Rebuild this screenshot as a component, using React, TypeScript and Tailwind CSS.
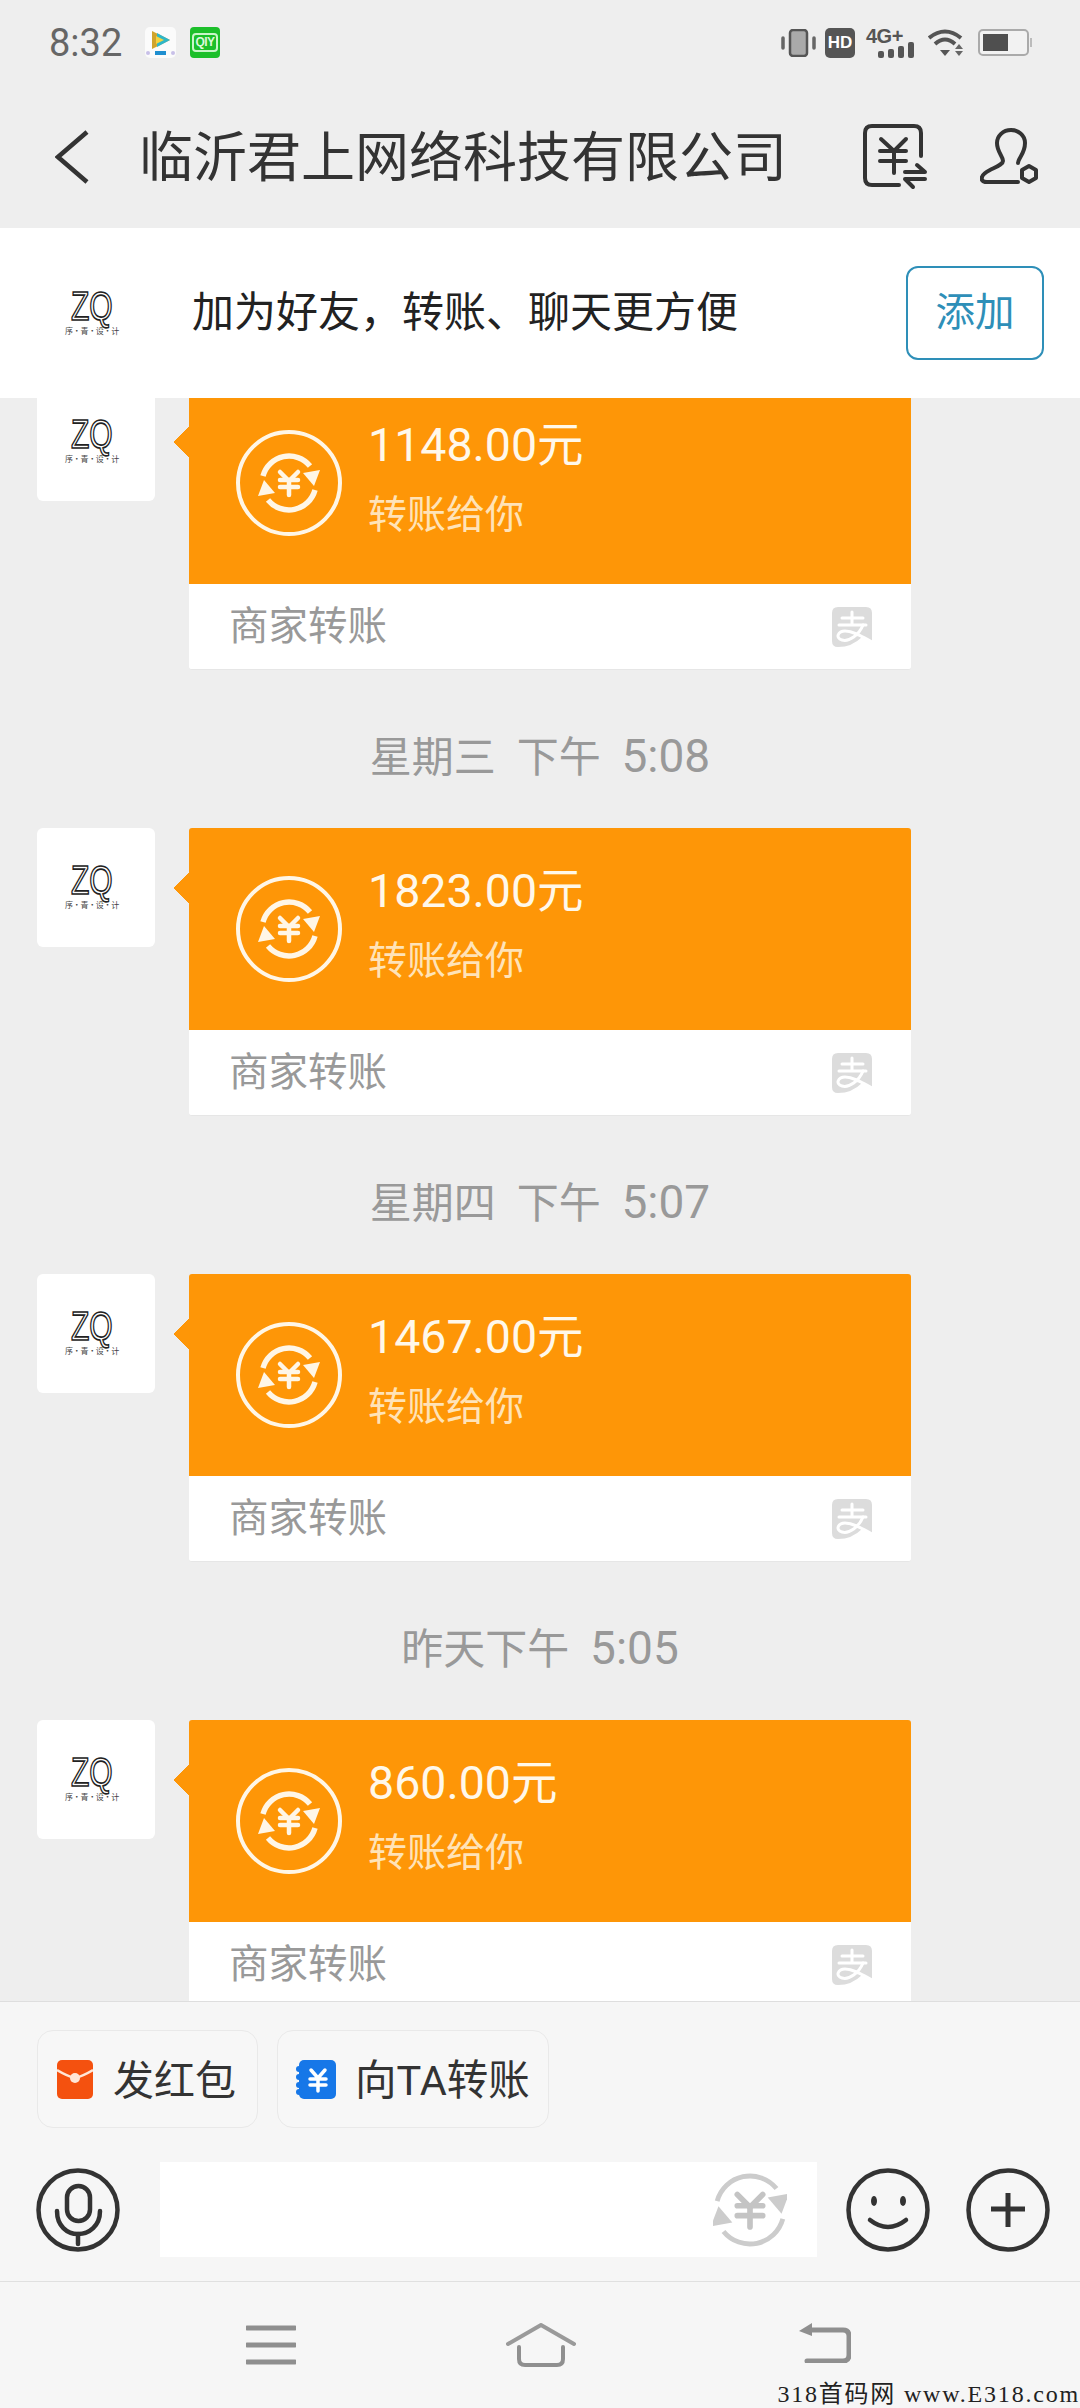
import React from "react";

const FONT = "font-['Roboto','Noto_Sans_CJK_SC',sans-serif]";

function Yen({ color, w = 4.5 }: { color: string; w?: number }) {
  return (
    <g fill="none" stroke={color} strokeWidth={w} strokeLinecap="round" strokeLinejoin="round">
      <path d="M44 42 L53 51 L62 42" />
      <path d="M44 50 H62 M44 57 H62 M53 51 V65" />
    </g>
  );
}

function Arcs({ color, r = 27, w = 5.5 }: { color: string; r?: number; w?: number }) {
  const c = 53;
  const k = r / 27;
  const p = (x: number, y: number, s: number) => `${c + s * x * k},${c + s * y * k}`;
  const half = (s: number) => (
    <g>
      <path
        d={`M${p(-26, -7, s)} A${r} ${r} 0 0 1 ${p(21, -17, s)}`}
        fill="none"
        stroke={color}
        strokeWidth={w}
      />
      <polygon points={`${p(14, -10, s)} ${p(31, -13, s)} ${p(25, 3, s)}`} fill={color} />
    </g>
  );
  return (
    <g>
      {half(1)}
      {half(-1)}
    </g>
  );
}

function TransferIcon() {
  return (
    <svg width="106" height="106" viewBox="0 0 106 106" className="shrink-0">
      <circle cx="53" cy="53" r="51" fill="none" stroke="#fff6e6" strokeWidth="4" />
      <Arcs color="#fff6e6" />
      <Yen color="#fff6e6" />
    </svg>
  );
}

function GrayTransfer() {
  return (
    <svg width="74" height="74" viewBox="15 15 76 76" className="shrink-0">
      <Arcs color="#cccccc" r={35} w={5} />
      <g transform="translate(-23.85 -23.85) scale(1.45)">
        <Yen color="#c4c4c4" w={4} />
      </g>
    </svg>
  );
}

function Alipay() {
  return (
    <svg width="40" height="40" viewBox="0 0 40 40" className="shrink-0">
      <path d="M6 0 H34 Q40 0 40 6 V36 L30 30 Q20 40 6 40 Q0 40 0 34 V6 Q0 0 6 0 Z" fill="#dcdcdc" />
      <g fill="none" stroke="#ffffff" strokeWidth="3" strokeLinecap="round">
        <path d="M10 11 H31 M7 18 H34 M20 5 V18" />
        <path d="M31 18 C27 28 17 35 10 33 C3 31 6 24 13 24 C22 24 31 30 40 35" />
      </g>
    </svg>
  );
}

function Avatar() {
  return (
    <div className="flex h-[119px] w-[118px] shrink-0 flex-col items-center rounded-[6px] bg-white pr-[8px] pt-[33px]">
      <div className="origin-center scale-x-75 font-['Liberation_Sans',sans-serif] text-[40px] leading-[38px] text-transparent [-webkit-text-stroke:1.6px_#222222]">
        ZQ
      </div>
      <div className="font-['Noto_Sans_CJK_SC',sans-serif] text-[8px] leading-[12px] tracking-[-0.3px] text-[#444444]">
        序·青·设·计
      </div>
    </div>
  );
}

function Transfer({ amount }: { amount: string }) {
  return (
    <div className="flex pl-[37px]">
      <Avatar />
      <div className="relative ml-[34px] w-[722px]">
        <svg width="17" height="32" viewBox="0 0 17 32" className="absolute left-[-16px] top-[44px]">
          <polygon points="17,0 1,16 17,32" fill="#fe9607" stroke="#fe9607" strokeLinejoin="round" strokeWidth="1" />
        </svg>
        <div className="flex h-[202px] items-center rounded-t-[3px] bg-[#fe9607] pl-[47px]">
          <TransferIcon />
          <div className="ml-[26px] flex flex-col gap-[14px] pb-[7px]">
            <div className="text-[46.5px] leading-[56px] text-[#fff8ea]">{amount}</div>
            <div className="text-[39px] leading-[56px] text-[#ffe3b8]">转账给你</div>
          </div>
        </div>
        <div className="flex h-[86px] items-center justify-between rounded-b-[3px] border-b border-[#e6e6e6] bg-white pl-[40px] pr-[39px]">
          <span className="pt-[1px] text-[39.5px] leading-[56px] text-[#999999]">商家转账</span>
          <Alipay />
        </div>
      </div>
    </div>
  );
}

function Stamp({ day, time }: { day: string; time: string }) {
  return (
    <div className="h-[158px] whitespace-pre pt-[58px] text-center text-[42px] leading-[56px] text-[#999999]">
      {day}
      {"  "}
      <span className="text-[46px]">{time}</span>
    </div>
  );
}

function StatusBar() {
  return (
    <div className="flex h-[85px] items-center pl-[49px] pr-[48px]">
      <span className="w-[96px] text-[38px] leading-[44px] text-[#666666]">8:32</span>
      <svg width="31" height="31" viewBox="0 0 31 31" className="shrink-0">
        <rect width="31" height="31" rx="5" fill="#fbfbfb" />
        <polygon points="7,4 25,13 7,22" fill="#d0a42c" />
        <polygon points="12,6 25,13 12,20" fill="#2fb6c8" />
        <polygon points="11,9 19,13 11,17" fill="#f4d33f" />
        <rect x="10" y="24" width="11" height="4" fill="#1f8fd0" />
        <circle cx="3" cy="26" r="2" fill="#c8c0e8" />
        <circle cx="28" cy="26" r="2" fill="#c8c0e8" />
      </svg>
      <div className="ml-[14px] flex h-[31px] w-[30px] items-center justify-center rounded-[4px] bg-[#1cbf2a]">
        <span className="rounded-[4px] border-2 border-[#c9f5c9] px-[1px] font-['Liberation_Sans',sans-serif] text-[12px] font-bold leading-[15px] tracking-[-0.5px] text-[#dcf8dc]">
          QIY
        </span>
      </div>
      <div className="ml-auto flex items-center">
        <svg width="35" height="28" viewBox="0 0 35 28" className="shrink-0">
          <rect x="9" y="1" width="17" height="26" rx="3" fill="#aaaaaa" stroke="#555555" strokeWidth="2.5" />
          <path d="M2 9 V19 M33 9 V19" stroke="#666666" strokeWidth="3.5" strokeLinecap="round" />
        </svg>
        <div className="ml-[9px] flex h-[30px] w-[30px] items-center justify-center rounded-[5px] bg-[#555555] font-['Liberation_Sans',sans-serif] text-[17px] font-bold leading-none text-white">
          HD
        </div>
        <div className="ml-[11px] flex h-[30px] w-[49px] flex-col">
          <span className="font-['Liberation_Sans',sans-serif] text-[20px] font-bold leading-[17px] tracking-[-0.5px] text-[#555555]">4G+</span>
          <svg width="36" height="16" viewBox="0 0 36 16" className="ml-[12px] mt-[-3px]">
            <rect x="0" y="9" width="6" height="7" rx="2" fill="#555555" />
            <rect x="10" y="7" width="6" height="9" rx="2" fill="#555555" />
            <rect x="20" y="4" width="6" height="12" rx="2" fill="#555555" />
            <rect x="30" y="0" width="6" height="16" rx="2" fill="#555555" />
          </svg>
        </div>
        <svg width="36" height="28" viewBox="0 0 36 28" className="ml-[13px] shrink-0">
          <g fill="none" stroke="#555555" strokeWidth="4">
            <path d="M1 9 Q17 -4 33 9" />
            <path d="M7 15 Q17 6 27 15" />
          </g>
          <polygon points="12,21 22,21 17,27" fill="#555555" />
          <polygon points="31,15 35,20 27,20" fill="#666666" />
          <polygon points="27,22 35,22 31,27" fill="#666666" />
        </svg>
        <svg width="54" height="27" viewBox="0 0 54 27" className="ml-[14px] shrink-0">
          <rect x="1" y="1" width="49" height="25" rx="4" fill="#f2f2f2" stroke="#aaaaaa" strokeWidth="2" />
          <rect x="5" y="5" width="25" height="17" fill="#4f4f4f" />
          <rect x="52" y="9" width="2" height="9" fill="#bbbbbb" />
        </svg>
      </div>
    </div>
  );
}

function Header() {
  return (
    <div className="flex h-[143px] items-center pl-[55px]">
      <svg width="34" height="54" viewBox="0 0 34 54" className="shrink-0">
        <path d="M32 2 L3 27 L32 52" fill="none" stroke="#333333" strokeWidth="4.5" />
      </svg>
      <div className="ml-[50px] w-[724px] pt-[5px] text-[54px] leading-[70px] text-[#333333]">临沂君上网络科技有限公司</div>
      <svg width="66" height="66" viewBox="0 0 66 66" className="shrink-0">
        <g fill="none" stroke="#333333" strokeWidth="4" strokeLinecap="round" strokeLinejoin="round">
          <path d="M58 32 V9 Q58 2 51 2 H9 Q2 2 2 9 V54 Q2 61 9 61 H36" />
          <path d="M18 15 L31 27 L43 15 M17 27 H43 M17 37 H43 M31 27 V49" />
          <path d="M42 48 H62 L54 41 M62 55 H42 L50 63" />
        </g>
      </svg>
      <svg width="60" height="58" viewBox="0 0 60 58" className="ml-[51px] shrink-0">
        <g fill="none" stroke="#333333" strokeWidth="4" strokeLinecap="round" strokeLinejoin="round">
          <path d="M38 35 C38 30 45 26 45 15 C45 7 38 2 31 2 C23 2 17 8 17 15 C17 24 23 28 23 33 C23 36 18 38 10 42 C2 46 1 49 2 52 C3 54 5 54 7 54 L38 54" />
          <polygon points="49,38 56,42 56,50 49,54 42,50 42,42" />
        </g>
      </svg>
    </div>
  );
}

function Banner() {
  return (
    <div className="flex h-[170px] items-center bg-white pl-[37px]">
      <Avatar />
      <div className="ml-[37px] w-[714px] text-[42px] leading-[60px] text-[#222222]">加为好友，转账、聊天更方便</div>
      <button className="flex h-[94px] w-[138px] items-center justify-center rounded-[12px] border-2 border-[#2e8fb8] text-[39.5px] leading-[50px] text-[#2e8fb8]">
        添加
      </button>
    </div>
  );
}

function Chips() {
  return (
    <div className="flex gap-[19px] pl-[37px] pt-[28px]">
      <div className="flex h-[98px] w-[221px] items-center rounded-[16px] border border-[#e9e9e9] bg-[#f7f7f7] pl-[19px]">
        <svg width="36" height="39" viewBox="0 0 36 39" className="shrink-0">
          <rect width="36" height="39" rx="5" fill="#f4510f" />
          <path d="M0 10 Q10 16 18 18 Q26 16 36 10" fill="none" stroke="#ffe6d6" strokeWidth="2.5" />
          <circle cx="18" cy="18" r="5" fill="#ffe6d6" />
        </svg>
        <span className="ml-[20px] pt-[3px] text-[41px] leading-[56px] text-[#333333]">发红包</span>
      </div>
      <div className="flex h-[98px] w-[272px] items-center rounded-[16px] border border-[#e9e9e9] bg-[#f7f7f7] pl-[18px]">
        <svg width="40" height="39" viewBox="0 0 40 39" className="shrink-0">
          <rect x="3" width="37" height="39" rx="5" fill="#1677e8" />
          <circle cx="3" cy="9" r="3" fill="#1677e8" />
          <circle cx="3" cy="17" r="3" fill="#1677e8" />
          <circle cx="3" cy="25" r="3" fill="#1677e8" />
          <circle cx="3" cy="32" r="3" fill="#1677e8" />
          <g fill="none" stroke="#ffffff" strokeWidth="3.5" strokeLinecap="round">
            <path d="M15 10 L22 18 L29 10 M14 19 H30 M14 25 H30 M22 18 V31" />
          </g>
        </svg>
        <span className="ml-[19px] pt-[3px] text-[41.5px] leading-[56px] text-[#333333]">向TA转账</span>
      </div>
    </div>
  );
}

function InputRow() {
  return (
    <div className="mb-[24px] mt-[34px] flex h-[95px] items-center pl-[36px]">
      <svg width="84" height="84" viewBox="0 0 84 84" className="shrink-0">
        <g fill="none" stroke="#333333" strokeWidth="4.5" strokeLinecap="round">
          <circle cx="42" cy="42" r="39.5" />
          <rect x="31" y="18" width="23" height="35" rx="11.5" />
          <path d="M21 43 C21 58 31 66 42 66 C53 66 64 58 64 43" />
          <path d="M42 66 V76" />
        </g>
      </svg>
      <div className="ml-[40px] flex h-[95px] w-[657px] items-center justify-end bg-white pr-[30px]">
        <GrayTransfer />
      </div>
      <svg width="84" height="84" viewBox="0 0 84 84" className="ml-[29px] shrink-0">
        <circle cx="42" cy="42" r="39.5" fill="none" stroke="#333333" strokeWidth="4.5" />
        <ellipse cx="28" cy="33" rx="3" ry="5" fill="#333333" />
        <ellipse cx="57" cy="33" rx="3" ry="5" fill="#333333" />
        <path d="M24 52 Q42 66 60 52" fill="none" stroke="#333333" strokeWidth="4.5" strokeLinecap="round" />
      </svg>
      <svg width="84" height="84" viewBox="0 0 84 84" className="ml-[36px] shrink-0">
        <circle cx="42" cy="42" r="39.5" fill="none" stroke="#333333" strokeWidth="4.5" />
        <path d="M25 41 H59 M42 25 V59" stroke="#333333" strokeWidth="5" />
      </svg>
    </div>
  );
}

function NavBar() {
  return (
    <div className="flex h-[126px] items-start border-t border-[#e0e0e0] pl-[246px] pt-[41px]">
      <svg width="50" height="42" viewBox="0 0 50 42" className="mt-[1px] shrink-0">
        <path d="M1 4 H49 M1 21 H49 M1 38 H49" stroke="#8f8f8f" strokeWidth="5" strokeLinecap="round" />
      </svg>
      <svg width="70" height="44" viewBox="0 0 70 44" className="ml-[210px] shrink-0">
        <path d="M2 21 L35 2 L68 21" fill="none" stroke="#9a9a9a" strokeWidth="4" strokeLinecap="round" strokeLinejoin="round" />
        <path d="M13 24 V36 Q13 42 19 42 H51 Q57 42 57 36 V24" fill="none" stroke="#8f8f8f" strokeWidth="4" strokeLinecap="round" />
      </svg>
      <svg width="52" height="40" viewBox="0 0 52 40" className="ml-[223px] shrink-0">
        <polygon points="0,8 13,0 13,13" fill="#8f8f8f" />
        <path d="M12 7 H44 Q50 7 50 13 V32 Q50 38 44 38 H8" fill="none" stroke="#8f8f8f" strokeWidth="5" strokeLinecap="round" />
      </svg>
    </div>
  );
}

export default function App() {
  return (
    <div className={`relative flex h-[2408px] w-[1080px] flex-col overflow-hidden bg-[#eeeeee] ${FONT}`}>
      <div className="bg-[#eeeeee]">
        <StatusBar />
        <Header />
      </div>
      <Banner />
      <div className="h-[1603px] overflow-hidden">
        <div className="mt-[-16px]">
          <Transfer amount="1148.00元" />
          <Stamp day={"星期三  下午"} time="5:08" />
          <Transfer amount="1823.00元" />
          <Stamp day={"星期四  下午"} time="5:07" />
          <Transfer amount="1467.00元" />
          <Stamp day={"昨天下午"} time="5:05" />
          <Transfer amount="860.00元" />
        </div>
      </div>
      <div className="flex flex-1 flex-col border-t border-[#dedede] bg-[#f6f6f6]">
        <Chips />
        <InputRow />
        <NavBar />
      </div>
      <div className="absolute bottom-0 right-0 whitespace-pre font-['Liberation_Serif','Noto_Sans_CJK_SC',serif] text-[24px] leading-[28px] tracking-[1.8px] text-[#222222]">
        318首码网 www.E318.com
      </div>
    </div>
  );
}
